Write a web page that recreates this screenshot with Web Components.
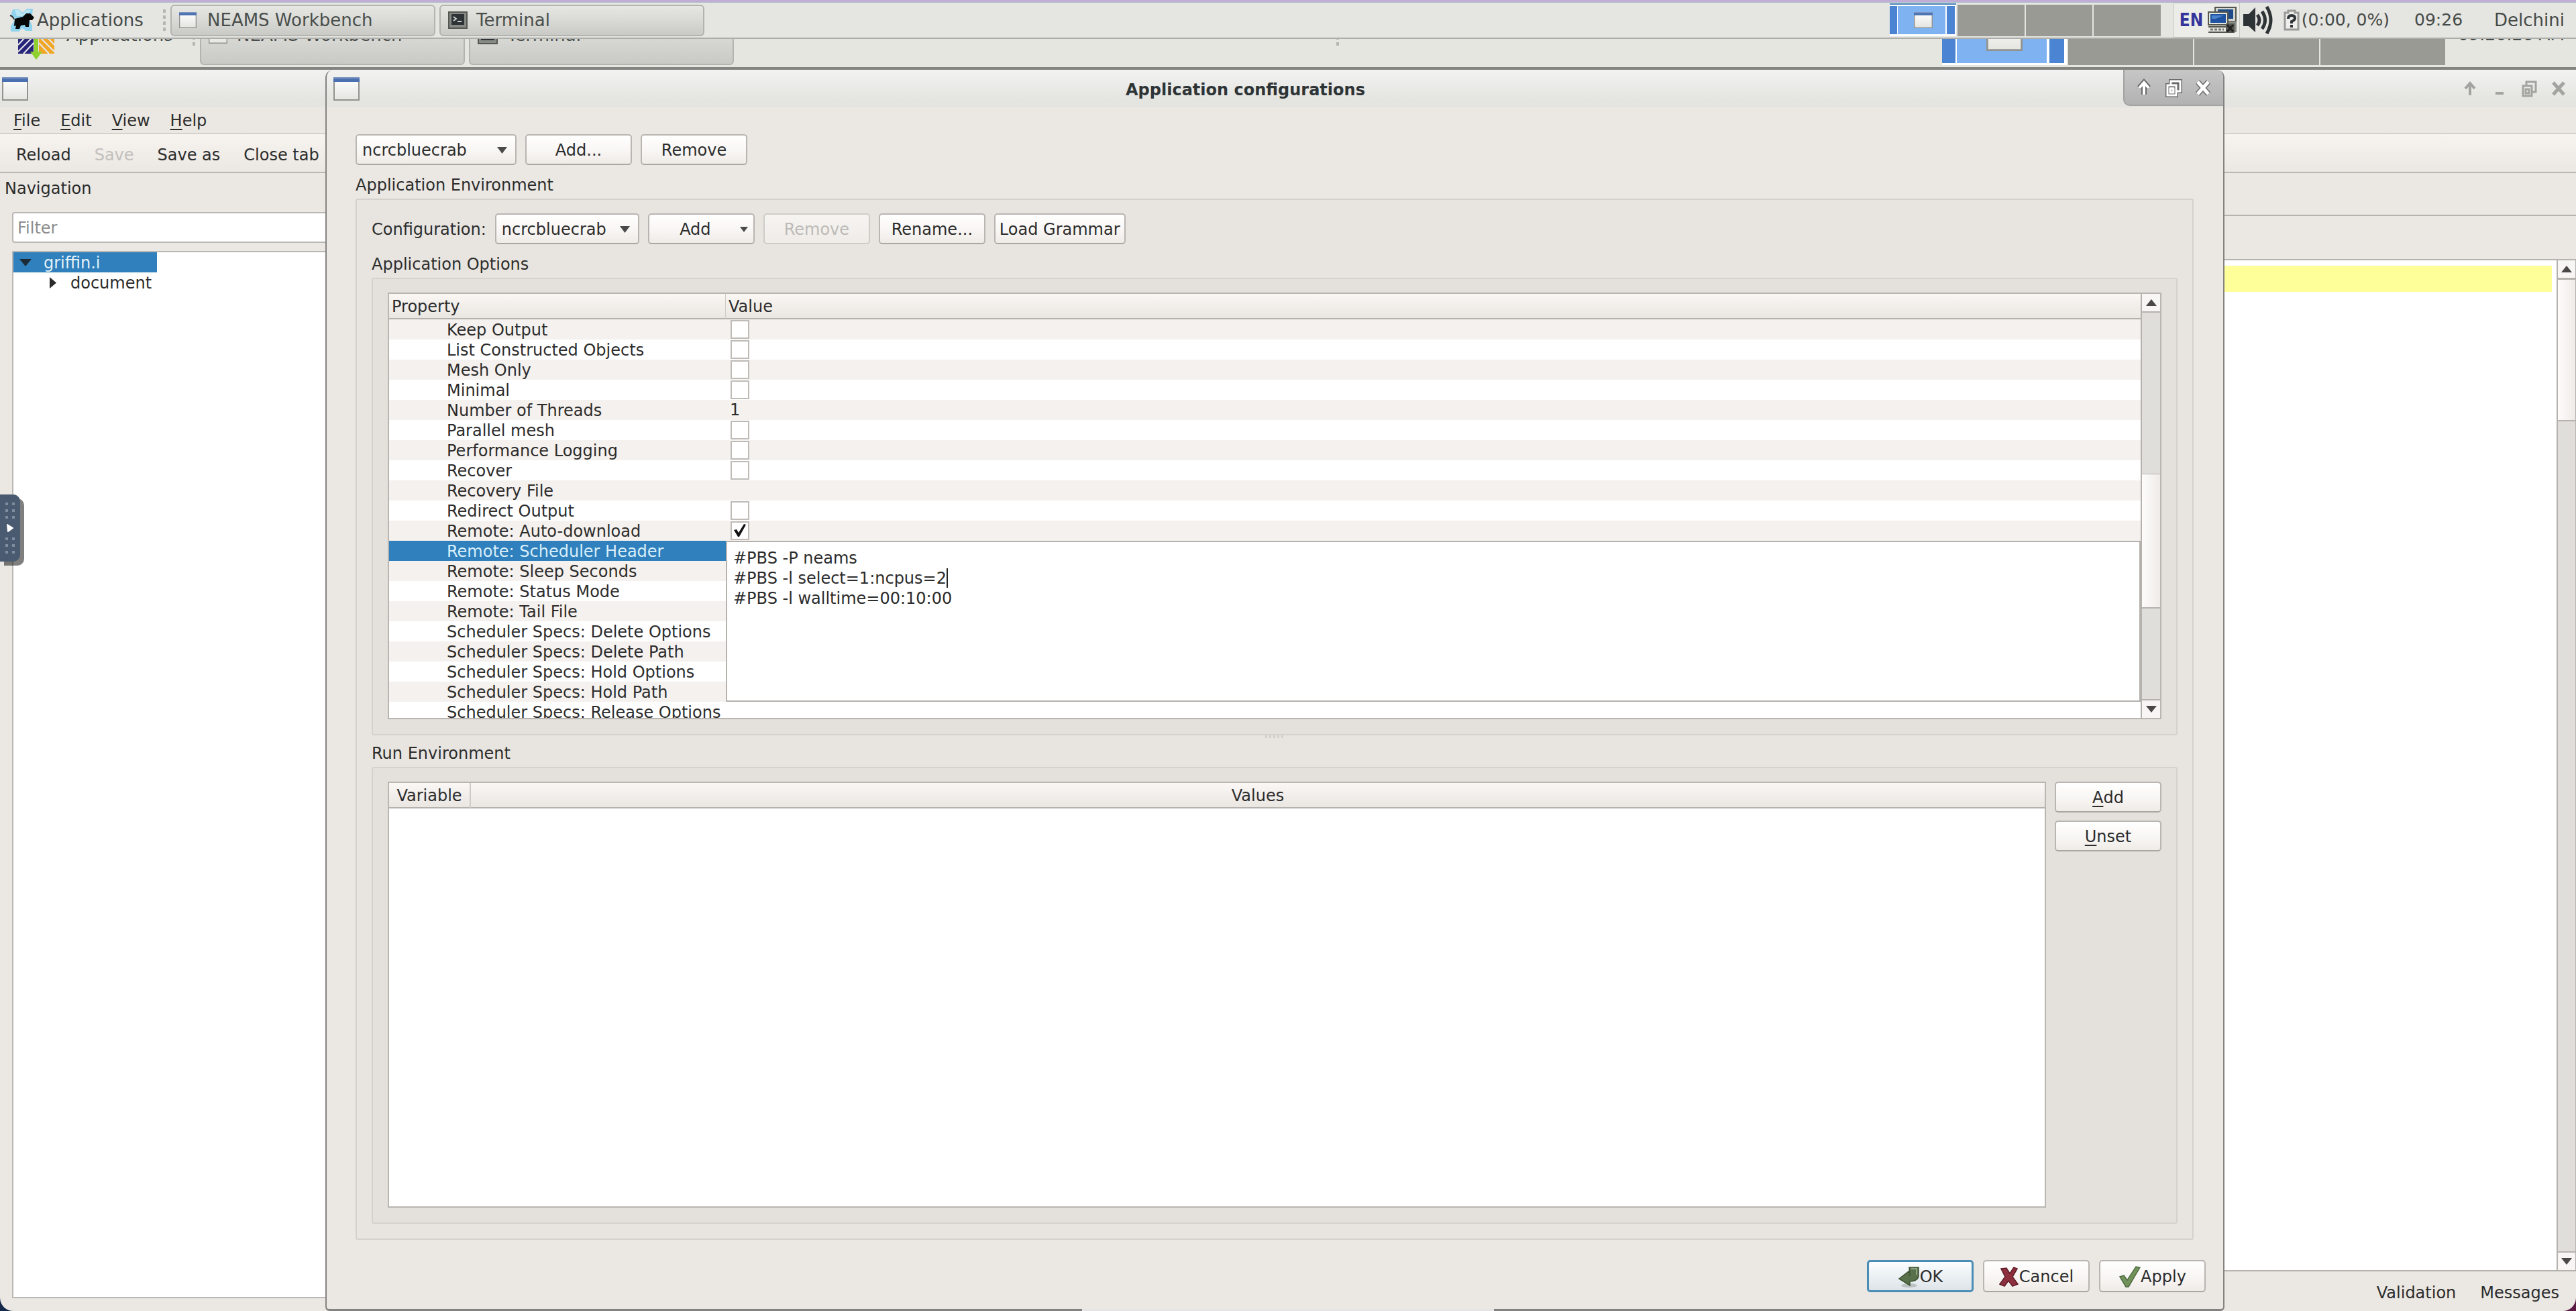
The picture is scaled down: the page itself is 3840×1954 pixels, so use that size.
<!DOCTYPE html>
<html lang="en">
<head>
<meta charset="utf-8">
<title>Application configurations</title>
<style>
html,body{margin:0;height:100%;overflow:hidden;background:linear-gradient(90deg,#14294a,#5c1a45)}
body{font:24px/30px "DejaVu Sans",sans-serif;color:#2c2c2c}
</style>
</head>
<body>
<desk-top></desk-top>
<script>
const define = (name, html, setup) => {
  const tpl = document.createElement('template');
  tpl.innerHTML = '<style>*{box-sizing:border-box}:host{box-sizing:border-box}u{text-underline-offset:4px;text-decoration-thickness:2px}button{font:inherit;color:inherit;margin:0}</style>' + html;
  customElements.define(name, class extends HTMLElement {
    constructor() {
      super();
      this.attachShadow({ mode: 'open' }).append(tpl.content.cloneNode(true));
    }
    connectedCallback() { if (setup && !this.ready) { this.ready = true; setup(this, this.shadowRoot); } }
  });
};

/* ---------- small controls ---------- */
define('ui-button', `<style>
:host{display:block;flex:none}
button{display:flex;align-items:center;justify-content:center;width:100%;height:46px;min-width:159px;padding:2px 6px 0;border:2px solid #b9b5b1;border-bottom-color:#aaa6a2;border-radius:5px;background:linear-gradient(#fff,#f9f7f5 50%,#efebe7);white-space:nowrap;position:relative}
button:disabled{color:#bdbbb8;border-color:#cfccc8;background:linear-gradient(#f6f4f1,#efece8)}
:host([primary]) button{border:3px solid #4a8db5;background:linear-gradient(#fcfdfe,#e8eef2 60%,#dfe4e8)}
:host([tall]) button{height:48px}
:host([menu]) button{padding-right:24px}
svg{display:none;position:absolute;right:8px;top:18px;width:12px;height:8px}
:host([menu]) svg{display:block}
</style><button type="button"><slot></slot><svg viewBox="0 0 12 8"><path d="M0 0h12L6 8z" fill="#4a4a4a"/></svg></button>`,
(h, r) => { r.querySelector('button').disabled = h.hasAttribute('disabled'); });

define('ui-select', `<style>
:host{display:flex;align-items:center;flex:none}
label{margin-right:13px;padding-top:2px}label:empty{display:none}
.box{position:relative;width:var(--w,240px)}
select{appearance:none;font:inherit;color:inherit;width:100%;height:46px;padding:2px 8px 0;border:2px solid #b9b5b1;border-bottom-color:#aaa6a2;border-radius:5px;background:linear-gradient(#fff,#f9f7f5 50%,#efebe7)}
svg{position:absolute;right:14px;top:19px;width:15px;height:10px;pointer-events:none}
</style><label for="s"></label><div class="box"><select id="s"></select><svg viewBox="0 0 15 10"><path d="M0 0h15L7.500 10z" fill="#4a4a4a"/></svg></div>`,
(h, r) => {
  r.querySelector('label').textContent = h.getAttribute('label') || '';
  const s = r.querySelector('select');
  s.add(new Option(h.getAttribute('value')));
  if (!h.hasAttribute('label')) s.setAttribute('aria-label', 'Application');
});

define('group-box', `<style>
:host{display:flex;flex-direction:column;flex:1 1 0;min-height:0}
.t{height:36px;padding-top:1px}
.b{flex:1;min-height:0;display:flex;flex-direction:column;border:2px solid #d5d2cd;border-radius:3px;padding:20px 22px 22px;background:var(--bg,#e8e5e0)}
</style><div class="t"><slot name="title"></slot></div><div class="b"><slot></slot></div>`);

define('scroll-bar', `<style>
:host{display:flex;flex-direction:column;width:29px;flex:none;border-left:2px solid #b5b2ae;background:#e0deda}
button{height:28px;padding:0;border:0;flex:none;display:flex;align-items:center;justify-content:center;background:#f8f6f4}
.u{border-bottom:2px solid #b5b2ae}.d{border-top:2px solid #b5b2ae}
.a{flex:var(--a,0) 1 0}.z{flex:var(--z,1) 1 0}
.m{flex:var(--m,1) 1 0;background:linear-gradient(90deg,#fdfcfb,#efebe8);border:solid #b5b2ae;border-width:1px 0 2px}
svg{width:16px;height:10px}
</style><button class="u" aria-label="Scroll up"><svg viewBox="0 0 16 10"><path d="M0 10h16L8 0z" fill="#4a4745"/></svg></button><div class="a"></div><div class="m"></div><div class="z"></div><button class="d" aria-label="Scroll down"><svg viewBox="0 0 16 10"><path d="M0 0h16L8 10z" fill="#4a4745"/></svg></button>`);

define('window-icon', `<style>:host{display:block;flex:none;width:var(--iw,39px);height:var(--ih,35px)}svg{display:block;width:100%;height:100%}</style>
<svg viewBox="0 0 39 35" preserveAspectRatio="none"><defs><linearGradient id="g" x2="0" y2="1"><stop stop-color="#fff"/><stop offset="1" stop-color="#e4e4e0"/></linearGradient></defs><rect x="1" y="1" width="37" height="33" fill="url(#g)" stroke="#92928e" stroke-width="2"/><path d="M0 0h39v7H0z" fill="#4a70b0"/><path d="M0 0h39v2H0z" fill="#7f97c0"/></svg>`);

define('title-bar', `<style>
:host{display:flex;height:56px;flex:none;background:linear-gradient(#f2f2f2,#e4e5e0 80%)}
window-icon{margin:11px 0 0 var(--il,10px)}
h1{flex:1;margin:0;padding:4px 0 0 12px;text-align:center;font:bold 24px/52px "DejaVu Sans",sans-serif;color:#2e3436}
.c{display:flex;align-items:center;gap:22px;height:54px;padding:2px 15px 0 0;color:#a3a3a0}
:host([active]) .c{padding:2px 19px 0 18px;background:linear-gradient(#c6c6c6,#b2b2b2);border:solid #a2a2a2;border-width:0 0 2px 2px;border-radius:0 8px 0 10px;color:#fff;--o:#6c6c6c}
:host([active]) .min{display:none}
button{border:0;padding:0;background:none;width:22px;height:28px;display:block}
svg{display:block;width:22px;height:28px;overflow:visible}
.o{stroke:var(--o,transparent);stroke-width:8}
</style><window-icon></window-icon><h1><slot></slot></h1><div class="c">
<button aria-label="Shade"><svg viewBox="0 0 22 28" fill="none" stroke-width="4"><path class="o" d="M11 24V7M4 14l7-8 7 8"/><path stroke="currentColor" d="M11 24V7M4 14l7-8 7 8"/></svg></button>
<button class="min" aria-label="Minimize"><svg viewBox="0 0 22 28"><path d="M5 19h12v4H5z" fill="currentColor"/></svg></button>
<button aria-label="Restore"><svg viewBox="0 0 22 28" fill="none"><path class="o" style="stroke-width:6" d="M7 9V4h14v15h-5M2 10h13v15H2z"/><path stroke="currentColor" stroke-width="3" d="M7 9V4h14v15h-5M2 10h13v15H2zM6 15h5v6H6z"/></svg></button>
<button aria-label="Close"><svg viewBox="0 0 22 28" fill="none" stroke-width="5"><path class="o" d="M3 5l16 18M19 5L3 23"/><path stroke="currentColor" d="M3 5l16 18M19 5L3 23"/></svg></button></div>`);

/* ---------- desktop panels ---------- */
define('task-button', `<style>
:host{display:block;width:395px;flex:none}
button{display:flex;align-items:center;width:100%;height:100%;padding:0 12px 0 11px;border:2px solid #b3b4af;border-radius:6px;background:linear-gradient(#e6e7e3,#d9dad5 50%,#c9cac5);font-size:26px;color:#4a4e4c;text-align:left}
</style><button><slot></slot></button>`);

define('grip-dots', `<style>:host{display:block;flex:none;width:4px;height:32px;background:repeating-linear-gradient(#b5b6b2 0 5px,transparent 5px 9px)}</style>`);

define('work-spaces', `<style>
:host{display:flex;gap:2px;flex:none;width:var(--pw,404px)}
div{flex:1;background:#999a94}
.on{display:flex;align-items:center;justify-content:center;background:linear-gradient(90deg,#4a84d2 0 11%,#fff 11% 12%,#7fb2f0 12% 84%,#fff 84% 86%,#4a84d2 86% 98%,#fff 98%);border:solid #fff;border-width:2px 0 3px;box-shadow:0 -2px #4a84b8}
</style><div class="on"><slot></slot></div><div></div><div></div><div></div>`);

define('top-panel', `<style>
:host{display:flex;align-items:center;padding-left:14px;padding-right:17px;background:#e5e5e2;border-bottom:2px solid #adadaa;height:54px;color:#454a48;font-size:25px;line-height:30px}
.m{display:flex;align-items:center;gap:3px;width:229px;border:0;padding:0;background:none;font-size:26px}
.m svg{width:38px;height:34px}
task-button{height:47px;margin-left:6px}
grip-dots{margin-right:1px}
.sp{flex:1}
.tray{display:flex;align-items:center;justify-content:space-between;width:99px;height:52px;margin:0 4px 0 19px;padding:0 3px 0 8px;border:1px solid #c6c6c3;background:#ecece9}
.en{font:bold 26px/30px "DejaVu Sans Condensed","DejaVu Sans",sans-serif;color:#33359a}
.bat{margin:0 3px 0 15px}
.clk{margin:0 47px 0 37px}
.who{font-size:26px}
</style>
<button class="m"><svg viewBox="0 0 38 34"><path d="M5 1h9l6 5 6-6h9l-1 9-5 6 5 10v8H25l-6-4-5 5H2v-8l6-9-6-7z" fill="#8fd3ee"/><path d="M8 2h6l6 6 5-6h7l-6 9H11z" fill="#b9e6f5"/><path d="M1 10q4 1 6 6" fill="none" stroke="#333" stroke-width="2"/><path d="M8 15l12-3 5-5h6l6 6-3 4h-4l-1 10h-5l-1-3-6 1-2 5H9l1-5-3 1z" fill="#080808"/></svg>Applications</button>
<grip-dots></grip-dots><task-button><window-icon style="--iw:26px;--ih:24px;margin-right:16px"></window-icon>NEAMS Workbench</task-button>
<task-button><svg width="29" height="26" viewBox="0 0 29 26" style="margin-right:13px"><rect x="1" y="1" width="27" height="24" fill="#888a85" stroke="#555753" stroke-width="2"/><rect x="5" y="4" width="19" height="16" fill="#2e3436"/><path d="M8 8l4 3-4 3M14 15h6" stroke="#cfd3cf" stroke-width="2" fill="none"/></svg>Terminal</task-button>
<div class="sp"></div>
<work-spaces style="height:47px"><window-icon style="--iw:28px;--ih:24px"></window-icon></work-spaces>
<div class="tray"><span class="en">EN</span><svg width="44" height="42" viewBox="0 0 44 42"><rect x="11" y="2" width="31" height="21" fill="#d3d7cf" stroke="#55574f" stroke-width="2"/><rect x="15" y="5" width="23" height="14" fill="#204a87"/><path d="M30 23h13v16H30z" fill="#8b8d87"/><rect x="1" y="9" width="29" height="19" fill="#e4e6e0" stroke="#55574f" stroke-width="2"/><rect x="4" y="12" width="23" height="13" fill="#1f52a0"/><path d="M6 14h18l-12 5H6z" fill="#4a82cc"/><path d="M1 31h26v8H1z" fill="#e4e6e0"/><path d="M1 31h26M1 39h26" stroke="#55574f" stroke-width="2"/><path d="M4 35h20" stroke="#777" stroke-width="3" stroke-dasharray="4 2"/><rect x="27" y="26" width="13" height="14" fill="#555753"/><path d="M29 28l9 10M38 28l-9 10" stroke="#222" stroke-width="3"/></svg></div>
<svg width="46" height="44" viewBox="0 0 46 44"><path d="M1 13h8L19 3v37L9 31H1z" fill="#2e3436"/><path d="M22 14q6 8 0 16M29 9q9 13 0 26M36 2q12 20 0 40" fill="none" stroke="#2e3436" stroke-width="5"/></svg>
<svg class="bat" width="24" height="32" viewBox="0 0 24 32"><path d="M7 2h10v3h5v25H2V5h5z" fill="#eeeeec" stroke="#9a9b97" stroke-width="3"/><path d="M7 14q0-5 5-5t5 4q0 3-5 5v3M12 23v4" fill="none" stroke="#2e3436" stroke-width="4"/></svg>
<span>(0:00, 0%)</span><span class="clk">09:26</span><span class="who">Delchini</span>`);

define('back-panel', `<style>
:host{display:flex;align-items:center;height:100px;padding:0 17px 0 25px;background:#e5e6e0;border-bottom:4px solid #83837f;color:#454a48;font-size:25px;line-height:30px}
.m{display:flex;align-items:center;gap:16px;width:262px;border:0;padding:0;background:none;font-size:26px}
.m svg{width:58px;height:74px}
task-button{height:90px;margin-left:6px}
grip-dots{margin-right:1px}
.sp{flex:1}work-spaces{--pw:750px;height:90px;margin-right:19px}
</style>
<button class="m"><svg viewBox="0 0 58 74" preserveAspectRatio="none"><path d="M29 0l10 12H19z" fill="#932279"/><path d="M2 9h23v26H2z" fill="#9ccd2a"/><path d="M33 9h23v26H33z" fill="#932279"/><path d="M2 39h23v26H2z" fill="#262577"/><path d="M33 39h23v26H33z" fill="#efa724"/><path d="M2 62l23-23M10 65l15-16M2 52l12-13M56 62L33 39M48 65L33 49M56 52L44 39" stroke="#e8e8f2" stroke-width="2"/><path d="M26 37h6v25h6l-9 12-9-12h6z" fill="#8fd02e"/></svg>Applications</button>
<grip-dots></grip-dots><task-button><window-icon style="--iw:28px;--ih:26px;margin-right:14px"></window-icon>NEAMS Workbench</task-button>
<task-button><svg width="30" height="28" viewBox="0 0 30 28" style="margin-right:14px"><rect x="1" y="1" width="28" height="26" fill="#888a85" stroke="#555753" stroke-width="2"/><rect x="5" y="4" width="20" height="18" fill="#2e3436"/></svg>Terminal</task-button>
<div class="sp"></div><grip-dots></grip-dots><div class="sp"></div>
<work-spaces><window-icon style="--iw:54px;--ih:48px"></window-icon></work-spaces>
<span>09:26:26 AM</span>`);

/* ---------- main window ---------- */
define('nav-tree', `<style>
:host{display:block;flex:1;border:2px solid #bab8b4;background:#fff}
ul{list-style:none;margin:0;padding:0}
li{display:flex;align-items:center;height:30px;padding-top:1px}
.s{width:214px;background:#2f80bc;color:#e4f1f8;padding-left:9px;gap:18px}
.c{padding-left:54px;gap:21px}
</style><ul role="tree"><li class="s" role="treeitem" aria-expanded="true"><svg width="18" height="11" viewBox="0 0 18 11"><path d="M0 0h18L9 11z" fill="#1b2a35"/></svg>griffin.i</li><li class="c" role="treeitem" aria-expanded="false"><svg width="10" height="17" viewBox="0 0 10 17"><path d="M0 0v17l10-8.500z" fill="#2b2b2b"/></svg>document</li></ul>`);

define('main-window', `<style>
:host{display:flex;flex-direction:column;background:#ebe8e3;border-radius:0 0 20px 20px;overflow:hidden}
title-bar{--il:3px}
button{border:0;background:none;padding:0}
nav{display:flex;gap:30px;height:38px;padding:1px 0 0 20px}
.tools{display:flex;gap:35px;height:60px;padding:6px 0 0 24px;border:solid #d4d1cc;border-width:2px 0;border-bottom-color:#b9b7b3;background:linear-gradient(#f7f4f0,#ebe7e3)}
button:disabled{color:#c2c0bc}
.body{flex:1;display:flex;min-height:0}
.left{width:17%;display:flex;flex-direction:column;padding:8px 0 19px 18px}
.left label{padding:0 0 20px;margin-left:-11px}
input{height:46px;margin-bottom:12px;font:inherit;padding:2px 6px 0;border:2px solid #bab8b4;border-radius:4px;background:#fff;outline:0}
input::placeholder{color:#8d8d8d;opacity:1}
.right{flex:1;display:flex;flex-direction:column;margin-left:8px}
.tabs{height:64px;border-bottom:2px solid #b5b3af}
.sub{height:66px;border-bottom:2px solid #b5b3af}
.ed{flex:1;display:flex;background:#fff;border-bottom:2px solid #b5b3af}
.pg{flex:1;padding:8px 7px 0 0}.hl{height:39px;background:#feff99}
footer{height:59px;display:flex;gap:36px;justify-content:flex-end;padding:4px 25px 0 0}
scroll-bar{--m:210;--z:1240;border-right:1px solid #b5b2ae}
</style>
<title-bar></title-bar>
<nav><button><u>F</u>ile</button><button><u>E</u>dit</button><button><u>V</u>iew</button><button><u>H</u>elp</button></nav>
<div class="tools"><button>Reload</button><button disabled>Save</button><button>Save as</button><button>Close tab</button></div>
<div class="body"><div class="left"><label for="f">Navigation</label><input id="f" placeholder="Filter"><nav-tree></nav-tree></div>
<div class="right"><div class="tabs"></div><div class="sub"></div><div class="ed"><div class="pg"><div class="hl"></div></div><scroll-bar></scroll-bar></div><footer><button>Validation</button><button>Messages</button></footer></div></div>`);

/* ---------- dialog ---------- */
define('property-table', `<style>
:host{display:flex;flex:1 1 0;min-height:0;border:2px solid #b9b6b2;background:#fff;overflow:hidden}
.v{flex:1;min-width:0;overflow:hidden}
table{width:100%;border-collapse:separate;border-spacing:0;table-layout:fixed}
col:first-child{width:502px}
th{height:38px;padding:2px 4px 0;font-weight:normal;text-align:left;background:linear-gradient(#faf7f4,#eae6e2);border-bottom:2px solid #b5b2ae;line-height:28px}
th:first-child{border-right:1px solid #cfccc8}
td{height:30px;padding:2px 0 0 86px;white-space:nowrap;line-height:28px}
td+td{padding:0 6px;position:relative;line-height:30px}
tr:nth-child(odd) td{background:#f5f1ee}
tr.s td:first-child{background:#2f80bc;color:#d8eefa}
input{appearance:none;display:block;margin:0 0 0 1px;width:28px;height:28px;border:2px solid #bfbcb8;background:#fff}
.k{display:block;position:absolute;left:11px;top:5px;pointer-events:none}
textarea{position:absolute;z-index:1;left:0;top:0;width:100%;height:240px;padding:9px 9px;border:2px solid #b5b2ae;resize:none;outline:0;font:inherit;line-height:30px;color:inherit;background:#fff}
i{position:absolute;z-index:2;left:329px;top:41px;width:2px;height:29px;background:#222}
scroll-bar{--a:242;--m:200;--z:136}
</style><div class="v"><table><colgroup><col><col></colgroup><thead><tr><th>Property</th><th>Value</th></tr></thead><tbody></tbody></table></div><scroll-bar></scroll-bar>`,
(h, r) => {
  const rows = [['Keep Output',0],['List Constructed Objects',0],['Mesh Only',0],['Minimal',0],['Number of Threads','1'],['Parallel mesh',0],['Performance Logging',0],['Recover',0],['Recovery File',''],['Redirect Output',0],['Remote: Auto-download',1],['Remote: Scheduler Header','edit'],['Remote: Sleep Seconds',''],['Remote: Status Mode',''],['Remote: Tail File',''],['Scheduler Specs: Delete Options',''],['Scheduler Specs: Delete Path',''],['Scheduler Specs: Hold Options',''],['Scheduler Specs: Hold Path',''],['Scheduler Specs: Release Options','']];
  r.querySelector('tbody').innerHTML = rows.map(([n, v]) => {
    let cell = v;
    if (v === 0 || v === 1) cell = `<input type="checkbox" aria-label="${n}"${v ? ' checked' : ''}>` + (v ? '<svg class="k" width="20" height="20" viewBox="0 0 20 20"><path d="M1 9l4-1 3 5L16 0l3 1L9 19H7z" fill="#111"/></svg>' : '');
    if (v === 'edit') cell = `<textarea aria-label="${n}" spellcheck="false">#PBS -P neams\n#PBS -l select=1:ncpus=2\n#PBS -l walltime=00:10:00</textarea><i></i>`;
    return `<tr${v === 'edit' ? ' class="s"' : ''}><td>${n}</td><td>${cell}</td></tr>`;
  }).join('');
});

define('run-environment', `<style>
:host{display:flex;flex:1 1 0;min-height:0;gap:13px}
.t{flex:1;border:2px solid #b9b6b2;background:#fff}
table{width:100%;border-spacing:0;table-layout:fixed}
col:first-child{width:122px}
th{height:38px;padding:2px 0 0;line-height:28px;font-weight:normal;background:linear-gradient(#faf7f4,#eae6e2);border-bottom:2px solid #b5b2ae}
th:first-child{border-right:2px solid #cfccc8}
.b{display:flex;flex-direction:column;gap:12px}
</style><div class="t"><table><colgroup><col><col></colgroup><thead><tr><th>Variable</th><th>Values</th></tr></thead></table></div>
<div class="b"><ui-button><u>A</u>dd</ui-button><ui-button><u>U</u>nset</ui-button></div>`);

define('config-dialog', `<style>
:host{display:flex;flex-direction:column;border:2px solid #858381;border-width:0 2px 3px;border-radius:12px 12px 6px 6px;background:#ebe8e3;overflow:hidden}
main{flex:1;min-height:0;display:flex;flex-direction:column;padding:40px 44px 30px 43px}
.r{display:flex;gap:13px;flex:none;margin-bottom:14px}
.in{--bg:#e4e1dc}
.sp{height:11px;flex:none;display:flex;justify-content:center}
.sp i{width:28px;height:4px;background:repeating-linear-gradient(90deg,#d3d0cb 0 3px,transparent 3px 6px)}
footer{display:flex;justify-content:flex-end;gap:14px;padding:0 26px 25px 0}
ui-select[label]{--w:215px}
svg{flex:none}
</style>
<title-bar active>Application configurations</title-bar>
<main><div class="r"><ui-select value="ncrcbluecrab"></ui-select><ui-button>Add...</ui-button><ui-button>Remove</ui-button></div>
<group-box><span slot="title">Application Environment</span>
<div class="r"><ui-select label="Configuration:" value="ncrcbluecrab"></ui-select><ui-button menu>Add</ui-button><ui-button disabled>Remove</ui-button><ui-button>Rename...</ui-button><ui-button>Load Grammar</ui-button></div>
<group-box class="in"><span slot="title">Application Options</span><property-table></property-table></group-box>
<div class="sp"><i></i></div>
<group-box class="in"><span slot="title">Run Environment</span><run-environment></run-environment></group-box>
</group-box></main>
<footer><ui-button tall primary><svg width="33" height="32" viewBox="0 0 33 32"><ellipse cx="17" cy="29" rx="12" ry="3" fill="#bcc2c2"/><path d="M17 2h14v12q0 8-13 9v6L2 19l14-11v6h2z" fill="#58714a" stroke="#3d5232" stroke-width="1.500"/><path d="M20 4h8v9" fill="none" stroke="#8fa383" stroke-width="2"/></svg>OK</ui-button>
<ui-button tall><svg width="30" height="30" viewBox="0 0 30 30"><path d="M3 3l8-1 5 8 6-9 5 2-7 12 8 11-8 3-6-8-6 8-7-3 8-11z" fill="#8e2f3e" stroke="#5f1c28" stroke-width="1.500"/></svg>Cancel</ui-button>
<ui-button tall><svg width="33" height="32" viewBox="0 0 33 32"><path d="M2 16l6-2 5 7L26 1l6 1L15 31h-4z" fill="#71935a" stroke="#516b40" stroke-width="1.500"/></svg>Apply</ui-button></footer>`);

define('side-handle', `<style>
:host{display:block}
button{display:flex;flex-direction:column;align-items:center;justify-content:space-between;width:30px;height:100px;padding:12px 8px;border:0;border-radius:0 10px 10px 0;background:#4a5a70;box-shadow:6px 6px rgba(0,0,0,.5)}
svg{display:block}
</style><button aria-label="Open control bar"><svg width="14" height="24" viewBox="0 0 14 24"><path d="M0 0h4v4H0zM10 0h4v4h-4zM0 10h4v4H0zM10 10h4v4h-4zM0 20h4v4H0zM10 20h4v4h-4z" fill="#818c9c"/></svg><svg width="10" height="12" viewBox="0 0 10 12"><path d="M1 1l1 10L9 6z" fill="#fff" stroke="#fff" stroke-width="2" stroke-linejoin="round"/></svg><svg width="14" height="24" viewBox="0 0 14 24"><path d="M0 0h4v4H0zM10 0h4v4h-4zM0 10h4v4H0zM10 10h4v4h-4zM0 20h4v4H0zM10 20h4v4h-4z" fill="#818c9c"/></svg></button>`);

define('desk-top', `<style>
:host{display:flex;flex-direction:column;height:100vh;position:relative}
.edge{height:4px;flex:none;background:linear-gradient(#c0aed6 75%,#a9bccb 75%)}
.panels{display:grid;flex:none}
.panels>*{grid-area:1/1}
top-panel{align-self:start;z-index:1}
main-window{flex:1;min-height:0}
config-dialog{position:absolute;left:485px;right:524px;top:104px;bottom:0}
side-handle{position:absolute;left:0;top:737px}
.lip{position:absolute;left:42%;right:42%;bottom:0;height:3px;background:#e4e5e4}
</style><div class="edge"></div><div class="panels"><back-panel></back-panel><top-panel></top-panel></div><main-window></main-window><config-dialog></config-dialog><div class="lip"></div><side-handle></side-handle>`);
</script>
</body>
</html>
